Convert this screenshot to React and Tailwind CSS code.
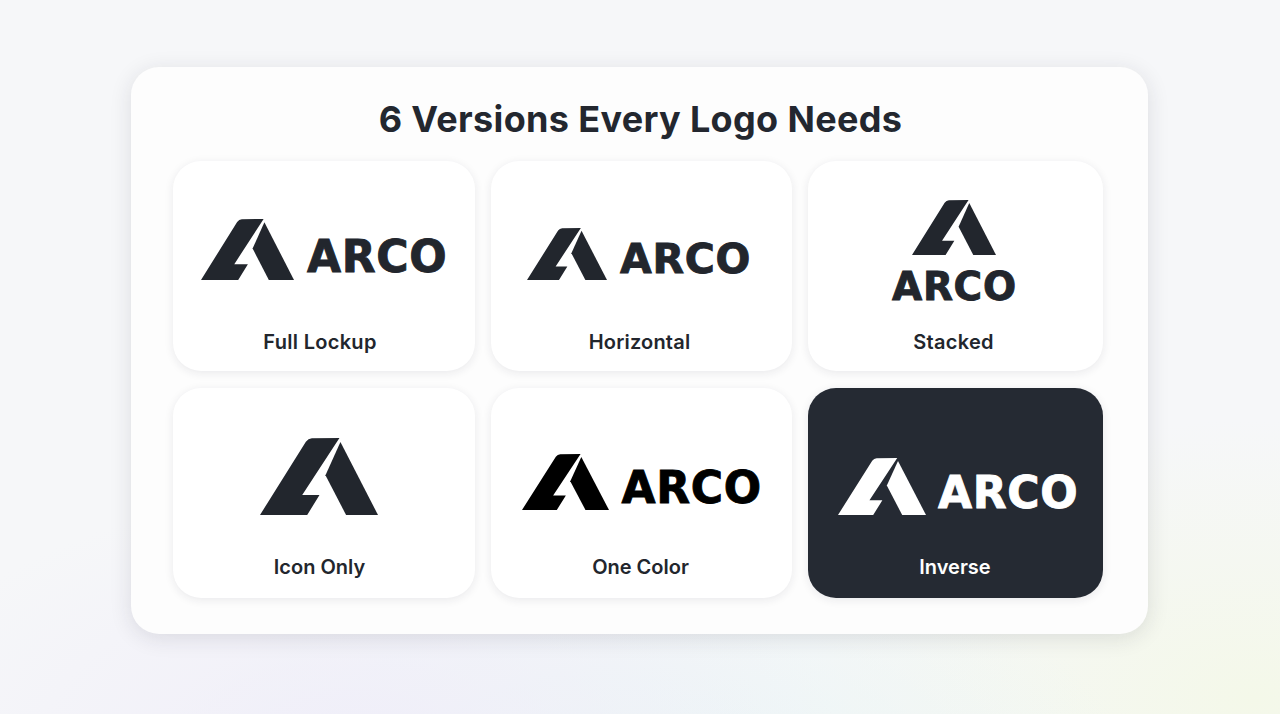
import React from "react";

const Mark = ({ className }) => (
  <svg viewBox="58 40 355 227" className={className} fill="currentColor" preserveAspectRatio="none">
    <path d="M58 267 L196 51 Q203 42 214 41 L297 40 L185 208 L237 208 L200 267 Z" />
    <path d="M300 52 L413 267 L317 267 L255 150 Z" />
  </svg>
);

const Card = ({ label, dark, className, labelClass, children }) => (
  <div
    className={`flex h-[210px] flex-col items-center rounded-[28px] shadow-[0_2px_10px_rgba(30,35,50,0.09)] ${dark ? "bg-[#252a33] text-white" : "bg-white text-[#22262d]"} ${className}`}
  >
    {children}
    <p className={`mt-auto text-[20px] leading-[24px] font-semibold ${labelClass}`}>{label}</p>
  </div>
);

const wordmark = "font-['DejaVu_Sans',sans-serif] font-bold leading-none whitespace-nowrap tracking-[0.7px] [-webkit-text-stroke:0.9px_currentColor]";

export default function App() {
  return (
    <div className="h-[714px] overflow-hidden bg-[#f6f7f9] bg-[radial-gradient(ellipse_480px_260px_at_28%_105%,#f0eef9,transparent),radial-gradient(ellipse_500px_240px_at_50%_110%,#eaf5f5,transparent),radial-gradient(ellipse_460px_280px_at_98%_98%,#f4f8e9,transparent)] pt-[67px] font-['Inter',sans-serif]">
      <div className="ml-[131px] h-[567px] w-[1017px] rounded-[28px] bg-[#fdfdfd] pt-[29px] pl-[42px] shadow-[0_4px_22px_rgba(30,35,50,0.12)]">
        <h1 className="-ml-[40px] text-center text-[36px] leading-[46px] font-bold tracking-[0.34px] text-[#23272f]">
          6 Versions Every Logo Needs
        </h1>
        <div className="mt-[19px] grid grid-cols-[302px_301px_295px] gap-x-[16px] gap-y-[17px]">
          <Card label="Full Lockup" className="pt-[58px]" labelClass="mr-[8px] mb-[17px] tracking-[0.3px]">
            <div className="flex items-center">
              <Mark className="h-[61px] w-[93px]" />
              <span className={`mt-[14px] ml-[13px] w-[140px] text-[44px] ${wordmark}`}>ARCO</span>
            </div>
          </Card>
          <Card label="Horizontal" className="pt-[66px]" labelClass="mr-[4px] mb-[17px] tracking-[0.2px]">
            <div className="mr-[7px] flex items-center">
              <Mark className="h-[52px] w-[80px]" />
              <span className={`mt-[12px] ml-[13px] w-[129px] text-[41px] ${wordmark}`}>ARCO</span>
            </div>
          </Card>
          <Card label="Stacked" className="pt-[39px]" labelClass="mr-[4px] mb-[17px] tracking-[0.3px]">
            <div className="mr-[3px] flex flex-col items-center">
              <Mark className="h-[55px] w-[84px]" />
              <span className={`mt-[12px] w-[124px] text-[39px] ${wordmark}`}>ARCO</span>
            </div>
          </Card>
          <Card label="Icon Only" className="pt-[50px]" labelClass="mr-[9px] mb-[19px]">
            <Mark className="mr-[10px] h-[77px] w-[118px]" />
          </Card>
          <Card label="One Color" className="pt-[66px] text-black" labelClass="mr-[2px] mb-[19px] text-[#22262d]">
            <div className="flex items-center">
              <Mark className="h-[56px] w-[87px]" />
              <span className={`mt-[12px] ml-[13px] w-[140px] text-[44px] ${wordmark}`}>ARCO</span>
            </div>
          </Card>
          <Card label="Inverse" dark className="pt-[70px]" labelClass="mr-[1px] mb-[19px]">
            <div className="ml-[4px] flex items-center">
              <Mark className="h-[57px] w-[88px]" />
              <span className={`mt-[12px] ml-[12px] w-[139px] text-[44px] ${wordmark}`}>ARCO</span>
            </div>
          </Card>
        </div>
      </div>
    </div>
  );
}
